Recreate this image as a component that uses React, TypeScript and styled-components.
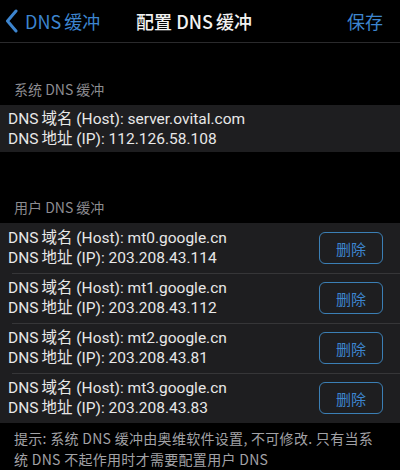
import React from "react";
import styled, { createGlobalStyle } from "styled-components";

const GlobalStyle = createGlobalStyle`
  html, body {
    margin: 0;
    padding: 0;
    background: #000;
  }
  body {
    font-family: "Roboto", "Noto Sans CJK SC", sans-serif;
    color: #e6e6e6;
  }
`;

type DnsEntry = {
  host: string;
  ip: string;
};

const userEntries: DnsEntry[] = [
  { host: "mt0.google.cn", ip: "203.208.43.114" },
  { host: "mt1.google.cn", ip: "203.208.43.112" },
  { host: "mt2.google.cn", ip: "203.208.43.81" },
  { host: "mt3.google.cn", ip: "203.208.43.83" },
];

const Screen = styled.div`
  width: 400px;
  height: 470px;
  background: #000;
  overflow: hidden;
  display: flex;
  flex-direction: column;
`;

const NavBar = styled.div`
  height: 47px;
  border-bottom: 1px solid #2a2a2c;
  display: grid;
  grid-template-columns: 1fr auto 1fr;
  align-items: center;
  padding: 0 17px 0 5px;
`;

const BackButton = styled.div`
  display: flex;
  align-items: center;
  gap: 6px;
  color: #3d85cf;
  font-size: 18px;
  font-family: "Noto Sans CJK SC", sans-serif;
`;

const Title = styled.div`
  font-size: 18px;
  font-weight: 500;
  color: #f2f2f2;
  font-family: "Noto Sans CJK SC", sans-serif;
`;

const SaveButton = styled.div`
  justify-self: end;
  color: #3d85cf;
  font-size: 18px;
  font-family: "Noto Sans CJK SC", sans-serif;
`;

const Gap = styled.span`
  display: inline-block;
  width: 3px;
`;

const SectionLabel = styled.div<{ $top: number }>`
  margin-top: ${(p) => p.$top}px;
  padding: 0 14px 6px;
  font-size: 14px;
  line-height: 20px;
  color: #8c8c90;
  font-family: "Noto Sans CJK SC", sans-serif;
`;

const Card = styled.div`
  background: #1e1e20;
`;

const Row = styled.div<{ $height: number }>`
  height: ${(p) => p.$height}px;
  display: flex;
  align-items: center;
  justify-content: space-between;
  padding: 0 17px 0 8px;
  position: relative;
  & + &::before {
    content: "";
    position: absolute;
    top: 0;
    left: 12px;
    right: 0;
    height: 1px;
    background: #363638;
  }
`;

const Info = styled.div`
  display: flex;
  flex-direction: column;
  font-size: 15.5px;
  line-height: 20px;
  color: #e8e8e8;
`;

const DeleteButton = styled.button`
  width: 64px;
  height: 32px;
  box-sizing: border-box;
  border: 1.5px solid #3b7fb5;
  border-radius: 6px;
  background: transparent;
  color: #3d85cf;
  font-size: 15px;
  font-family: "Noto Sans CJK SC", sans-serif;
  padding: 0;
`;

const Footnote = styled.div`
  padding: 5px 24px 0 14px;
  font-size: 14px;
  letter-spacing: 0.3px;
  line-height: 21px;
  color: #a2a2a6;
  font-family: "Noto Sans CJK SC", sans-serif;
`;

const Chevron = () => (
  <svg width="14" height="24" viewBox="0 0 14 24" fill="none">
    <path d="M11 2 L2.5 12 L11 22" stroke="#3d85cf" strokeWidth="3" strokeLinecap="round" strokeLinejoin="round" />
  </svg>
);

const EntryInfo = ({ host, ip }: DnsEntry) => (
  <Info>
    <span>DNS<Gap />域名 (Host): {host}</span>
    <span>DNS<Gap />地址 (IP): {ip}</span>
  </Info>
);

export default function App() {
  return (
    <Screen>
      <GlobalStyle />
      <NavBar>
        <BackButton>
          <Chevron />
          <span>DNS<Gap />缓冲</span>
        </BackButton>
        <Title>配置 DNS<Gap />缓冲</Title>
        <SaveButton>保存</SaveButton>
      </NavBar>

      <SectionLabel $top={36}>系统 DNS 缓冲</SectionLabel>
      <Card>
        <Row $height={47}>
          <EntryInfo host="server.ovital.com" ip="112.126.58.108" />
        </Row>
      </Card>

      <SectionLabel $top={45}>用户 DNS 缓冲</SectionLabel>
      <Card>
        {userEntries.map((entry) => (
          <Row $height={50} key={entry.host}>
            <EntryInfo {...entry} />
            <DeleteButton>删除</DeleteButton>
          </Row>
        ))}
      </Card>

      <Footnote>
        提示: 系统 DNS 缓冲由奥维软件设置, 不可修改. 只有当系统 DNS 不起作用时才需要配置用户 DNS
      </Footnote>
    </Screen>
  );
}
